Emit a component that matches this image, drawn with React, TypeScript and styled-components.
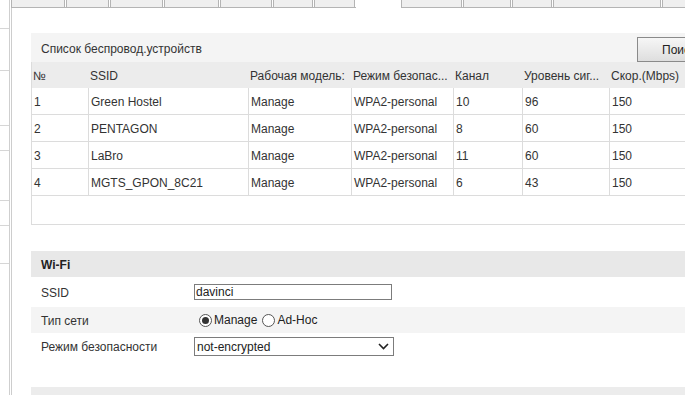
import React from "react";
import styled, { createGlobalStyle } from "styled-components";

const Global = createGlobalStyle`
  html, body { margin: 0; padding: 0; background: #fff; }
  body {
    width: 685px; height: 395px; overflow: hidden;
    font-family: "Liberation Sans", Arial, sans-serif;
    font-size: 12px; color: #333;
  }
  * { box-sizing: border-box; }
`;

const Page = styled.div`
  display: flex;
  height: 395px;
  width: 685px;
  overflow: hidden;
`;

const Sidebar = styled.div`
  flex: 0 0 10px;
  border-right: 1px solid #cfcfcf;
  display: flex;
  flex-direction: column;
`;

const SideItem = styled.div<{ $h: number }>`
  height: ${(p) => p.$h}px;
  border-bottom: 1px solid #d6d6d6;
  flex: 0 0 auto;
`;

const Main = styled.div`
  flex: 1;
  margin-left: 1px;
  display: flex;
  flex-direction: column;
  min-width: 0;
`;

const TabBar = styled.div`
  display: flex;
  height: 8px;
  flex: 0 0 8px;
`;

const TabGroup = styled.div<{ $w: number }>`
  display: flex;
  gap: 1px;
  width: ${(p) => p.$w}px;
  flex: 0 0 auto;
  border-bottom: 1px solid #b4b4b4;
`;

const Tab = styled.div<{ $w: number }>`
  width: ${(p) => p.$w}px;
  flex: 0 0 auto;
  background: #efefef;
  border-left: 1px solid #b4b4b4;
  border-right: 1px solid #b4b4b4;
`;

const ActiveTab = styled.div`
  width: 45px;
  flex: 0 0 auto;
`;

const Panel = styled.div`
  flex: 1;
  border-left: 1px solid #cdcdcd;
  padding: 25px 0 0 19px;
  overflow: hidden;
`;

const Section = styled.div`
  width: 680px;
`;

const ListHeader = styled.div`
  height: 29px;
  background: #f4f4f4;
  display: flex;
  justify-content: space-between;
  align-items: center;
  padding: 2px 0 0 10px;
`;

const Button = styled.button`
  align-self: flex-end;
  height: 25px;
  width: 72px;
  margin-right: 2px;
  padding: 1px 0 0 24px;
  text-align: left;
  border: 1px solid #8a8a8a;
  background: linear-gradient(#f6f6f6, #dedede);
  font-family: inherit;
  font-size: 12px;
  color: #222;
`;

const TableBox = styled.div`
  height: 163px;
  border-left: 1px solid #dcdcdc;
  border-bottom: 1px solid #dcdcdc;
  display: grid;
  grid-template-columns: 57px 160px 103px 102px 69px 87px 1fr;
  grid-template-rows: 26px repeat(4, 27px);
  align-content: start;
`;

const HeadCell = styled.div`
  background: #ececec;
  display: flex;
  align-items: center;
  padding: 2px 0 0 1px;
  white-space: nowrap;
  overflow: hidden;
`;

const Cell = styled.div`
  display: flex;
  align-items: center;
  padding: 2px 0 0 2px;
  border-right: 1px solid #dcdcdc;
  border-bottom: 1px solid #dcdcdc;
  white-space: nowrap;
  overflow: hidden;
`;

const FormSection = styled.div`
  width: 680px;
  margin-top: 26px;
`;

const FormHeader = styled.div`
  height: 26px;
  background: #e8e8e8;
  display: flex;
  align-items: center;
  padding: 1px 0 0 10px;
  font-weight: bold;
  color: #222;
`;

const FormRow = styled.div<{ $h: number; $shade?: boolean }>`
  height: ${(p) => p.$h}px;
  display: grid;
  grid-template-columns: 163px 1fr;
  align-items: center;
  background: ${(p) => (p.$shade ? "#f4f4f4" : "#fff")};
`;

const Label = styled.div`
  padding: 1px 0 0 10px;
`;

const TextInput = styled.div`
  width: 198px;
  height: 16px;
  border: 1px solid #7c7c7c;
  display: flex;
  align-items: center;
  padding-left: 1px;
  color: #222;
`;

const RadioGroup = styled.div`
  display: flex;
  align-items: center;
  padding-left: 5px;
  gap: 5px;
`;

const RadioOption = styled.label`
  display: flex;
  align-items: center;
  gap: 2px;
  color: #222;
`;

const RadioCircle = styled.span<{ $on?: boolean }>`
  width: 13px;
  height: 13px;
  border-radius: 50%;
  border: 1px solid #555;
  background: #fff;
  display: flex;
  align-items: center;
  justify-content: center;
  &::after {
    content: "";
    width: 7px;
    height: 7px;
    border-radius: 50%;
    background: ${(p) => (p.$on ? "#333" : "transparent")};
  }
`;

const Select = styled.div`
  width: 200px;
  height: 19px;
  border: 1px solid #7c7c7c;
  display: flex;
  align-items: center;
  justify-content: space-between;
  padding: 0 4px 0 2px;
  color: #222;
`;

const BottomBand = styled.div`
  width: 680px;
  height: 20px;
  margin-top: 27px;
  background: #ececec;
`;

const sideItems = [29, 42, 55, 25, 50, 25, 38];
const leftTabs = [55, 44, 54, 56, 53, 41, 42];
const rightTabs = [62, 49, 41, 109, 60];

const headers = ["№", "SSID", "Рабочая модель:", "Режим безопас...", "Канал", "Уровень сиг...", "Скор.(Mbps)"];
const rows = [
  ["1", "Green Hostel", "Manage", "WPA2-personal", "10", "96", "150"],
  ["2", "PENTAGON", "Manage", "WPA2-personal", "8", "60", "150"],
  ["3", "LaBro", "Manage", "WPA2-personal", "11", "60", "150"],
  ["4", "MGTS_GPON_8C21", "Manage", "WPA2-personal", "6", "43", "150"],
];

export default function App() {
  return (
    <>
      <Global />
      <Page>
        <Sidebar>
          {sideItems.map((h, i) => (
            <SideItem key={i} $h={h} />
          ))}
        </Sidebar>
        <Main>
          <TabBar>
            <TabGroup $w={345}>
              {leftTabs.map((w, i) => (
                <Tab key={i} $w={w - 1} />
              ))}
            </TabGroup>
            <ActiveTab />
            <TabGroup $w={330}>
              {rightTabs.map((w, i) => (
                <Tab key={i} $w={w - 1} />
              ))}
            </TabGroup>
          </TabBar>
          <Panel>
            <Section>
              <ListHeader>
                <span>Список беспровод.устройств</span>
                <Button>Поиск</Button>
              </ListHeader>
              <TableBox>
                {headers.map((h) => (
                  <HeadCell key={h}>{h}</HeadCell>
                ))}
                {rows.map((r) =>
                  r.map((c, j) => <Cell key={r[0] + "-" + j}>{c}</Cell>)
                )}
              </TableBox>
            </Section>
            <FormSection>
              <FormHeader>Wi-Fi</FormHeader>
              <FormRow $h={30}>
                <Label>SSID</Label>
                <TextInput>davinci</TextInput>
              </FormRow>
              <FormRow $h={26} $shade>
                <Label>Тип сети</Label>
                <RadioGroup>
                  <RadioOption>
                    <RadioCircle $on />
                    Manage
                  </RadioOption>
                  <RadioOption>
                    <RadioCircle />
                    Ad-Hoc
                  </RadioOption>
                </RadioGroup>
              </FormRow>
              <FormRow $h={27}>
                <Label>Режим безопасности</Label>
                <Select>
                  <span>not-encrypted</span>
                  <svg width="11" height="7" viewBox="0 0 11 7">
                    <polyline points="1,1 5.5,5.5 10,1" fill="none" stroke="#222" strokeWidth="1.6" />
                  </svg>
                </Select>
              </FormRow>
            </FormSection>
            <BottomBand />
          </Panel>
        </Main>
      </Page>
    </>
  );
}
